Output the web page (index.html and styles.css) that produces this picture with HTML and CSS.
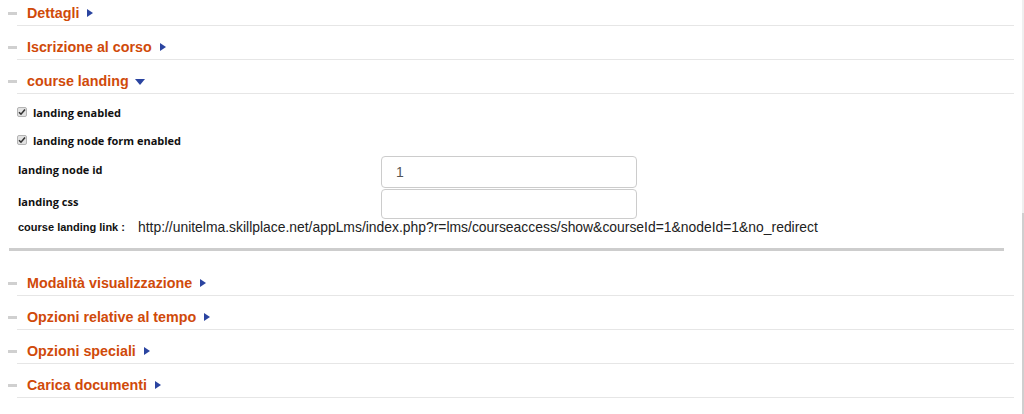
FILE: index.html
```html
<!DOCTYPE html>
<html>
<head>
  <title>Course settings</title>
  <link rel="stylesheet" href="styles.css">
</head>
<body>
  <div class="panel">
    <div class="section">
      <span class="dash"></span>
      <div class="section-title">Dettagli <span class="arrow-right"></span></div>
    </div>
    <div class="section">
      <span class="dash"></span>
      <div class="section-title">Iscrizione al corso <span class="arrow-right"></span></div>
    </div>
    <div class="section">
      <span class="dash"></span>
      <div class="section-title">course landing <span class="arrow-down"></span></div>
    </div>

    <div class="landing-body">
      <div class="check-row">
        <span class="check">
          <svg width="8" height="8" viewBox="0 0 8 8"><path d="M1 4.2 L3 6.2 L7 1.6" fill="none" stroke="#333" stroke-width="1.6"/></svg>
        </span>
        <label class="check-label">landing enabled</label>
      </div>
      <div class="check-row">
        <span class="check">
          <svg width="8" height="8" viewBox="0 0 8 8"><path d="M1 4.2 L3 6.2 L7 1.6" fill="none" stroke="#333" stroke-width="1.6"/></svg>
        </span>
        <label class="check-label">landing node form enabled</label>
      </div>
      <div class="field-row first">
        <label class="field-label" for="node-id">landing node id</label>
        <input class="field-input tall" type="text" id="node-id" value="1">
      </div>
      <div class="field-row">
        <label class="field-label" for="landing-css">landing css</label>
        <input class="field-input" type="text" id="landing-css">
      </div>
      <div class="link-row">
        <span class="link-label">course landing link :</span>
        <span class="link-url">http://unitelma.skillplace.net/appLms/index.php?r=lms/courseaccess/show&amp;courseId=1&amp;nodeId=1&amp;no_redirect</span>
      </div>
    </div>

    <div class="separator"></div>

    <div class="section">
      <span class="dash"></span>
      <div class="section-title">Modalità visualizzazione <span class="arrow-right"></span></div>
    </div>
    <div class="section">
      <span class="dash"></span>
      <div class="section-title">Opzioni relative al tempo <span class="arrow-right"></span></div>
    </div>
    <div class="section">
      <span class="dash"></span>
      <div class="section-title">Opzioni speciali <span class="arrow-right"></span></div>
    </div>
    <div class="section">
      <span class="dash"></span>
      <div class="section-title">Carica documenti <span class="arrow-right"></span></div>
    </div>
  </div>

  <div class="scroll-track"><div class="scroll-thumb"></div></div>
</body>
</html>
```

FILE: styles.css
```css
body {
  margin: 0;
  background-color: #fff;
  font-family: "Liberation Sans", Arial, sans-serif;
  color: #222;
}

.panel {
  margin-left: 8px;
  width: 1006px;
}

.section {
  display: flex;
  align-items: center;
  height: 26px;
  margin-bottom: 8px;
}

.dash {
  width: 9px;
  height: 3px;
  background-color: #d0d0d0;
}

.section-title {
  flex: 1;
  display: flex;
  align-items: center;
  height: 26px;
  box-sizing: border-box;
  padding-left: 10px;
  padding-top: 1px;
  border-bottom: 1px solid #e6e6e6;
  font-size: 14.3px;
  font-weight: bold;
  color: #d04a0a;
  white-space: pre;
}

.arrow-right {
  display: inline-block;
  margin-left: 4px;
  width: 0;
  height: 0;
  border-left: 6px solid #2a44a0;
  border-top: 4px solid transparent;
  border-bottom: 4px solid transparent;
}

.arrow-down {
  display: inline-block;
  margin-left: 2px;
  margin-top: 2px;
  width: 0;
  height: 0;
  border-top: 6px solid #2a44a0;
  border-left: 5px solid transparent;
  border-right: 5px solid transparent;
}

.landing-body {
  margin-top: -8px;
  padding: 4px 0 0 9px;
}

.check-row {
  display: flex;
  align-items: center;
  height: 28px;
}

.check {
  display: flex;
  align-items: center;
  justify-content: center;
  width: 10px;
  height: 10px;
  box-sizing: border-box;
  border: 1px solid #b4b4b4;
  border-radius: 2px;
  background-color: #e2e2e2;
}

.check-label {
  margin-left: 6px;
  font-family: "Open Sans", sans-serif;
  font-size: 11px;
  font-weight: bold;
  color: #111;
}

.field-row {
  display: flex;
  align-items: center;
  margin-top: 1px;
}

.field-row.first {
  margin-top: 2px;
}

.field-label {
  width: 363px;
  margin-left: 1px;
  padding-bottom: 5px;
  font-family: "Open Sans", sans-serif;
  font-size: 11px;
  font-weight: bold;
  color: #111;
}

.field-input {
  width: 256px;
  height: 30px;
  box-sizing: border-box;
  padding: 0 14px;
  border: 1px solid #ccc;
  border-radius: 4px;
  font-family: "Liberation Sans", Arial, sans-serif;
  font-size: 14px;
  color: #555;
  outline: none;
}

.field-input.tall {
  height: 32px;
}

.link-row {
  display: flex;
  align-items: center;
  height: 16px;
  margin-left: 1px;
}

.link-label {
  font-size: 11px;
  font-weight: bold;
  color: #111;
  margin-right: 13px;
}

.link-url {
  font-size: 13.9px;
  color: #222;
}

.separator {
  margin: 13px 0 19px 1px;
  width: 995px;
  height: 3px;
  background-color: #cdcdcd;
}

.scroll-track {
  position: fixed;
  top: 0;
  right: 0;
  width: 2px;
  height: 414px;
  background-color: #efefef;
}

.scroll-thumb {
  margin-top: 213px;
  height: 201px;
  background-color: #cfcfcf;
}
```
